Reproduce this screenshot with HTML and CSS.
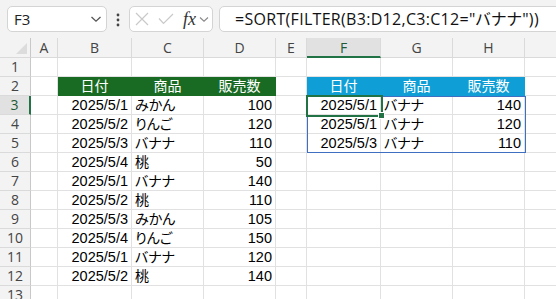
FILE: index.html
```html
<!DOCTYPE html>
<html lang="ja">
<head>
    <meta charset="UTF-8">
    <title>SORT FILTER</title>
    <link rel="stylesheet" href="styles.css">
</head>
<body>
    <div class="formula-bar">
        <div class="name-box">
            <span>F3</span>
            <svg class="chev" width="12" height="8" viewBox="0 0 12 8"><path d="M1.5 2 L6 6.2 L10.5 2" fill="none" stroke="#555" stroke-width="1.3"/></svg>
        </div>
        <div class="dots">
            <svg width="4" height="14" viewBox="0 0 4 14"><circle cx="2" cy="2" r="1.4" fill="#444"/><circle cx="2" cy="7" r="1.4" fill="#444"/><circle cx="2" cy="12" r="1.4" fill="#444"/></svg>
        </div>
        <div class="fx-box">
            <svg width="14" height="14" viewBox="0 0 14 14"><path d="M1 1 L13 13 M13 1 L1 13" stroke="#c9c9c9" stroke-width="1.2"/></svg>
            <svg width="16" height="12" viewBox="0 0 16 12"><path d="M1 5.5 L5.5 10.5 L15 1" fill="none" stroke="#c9c9c9" stroke-width="1.2"/></svg>
            <span class="fx">fx</span>
            <svg width="10" height="7" viewBox="0 0 10 7"><path d="M1 1.5 L5 5.2 L9 1.5" fill="none" stroke="#888" stroke-width="1.1"/></svg>
        </div>
        <div class="formula">=SORT(FILTER(B3:D12,C3:C12="バナナ"))</div>
    </div>

    <div class="sheet">
        <div class="corner"></div><div class="ch">A</div><div class="ch">B</div><div class="ch">C</div><div class="ch">D</div><div class="ch">E</div><div class="ch sel">F</div><div class="ch">G</div><div class="ch">H</div><div class="ch"></div>

        <div class="rh">1</div><div></div><div></div><div></div><div></div><div></div><div></div><div></div><div></div><div></div>
        <div class="rh">2</div><div></div><div class="hg">日付</div><div class="hg">商品</div><div class="hg">販売数</div><div></div><div class="hb">日付</div><div class="hb">商品</div><div class="hb">販売数</div><div></div>
        <div class="rh sel">3</div><div></div><div class="num">2025/5/1</div><div class="txt">みかん</div><div class="num">100</div><div></div><div class="num">2025/5/1</div><div class="txt">バナナ</div><div class="num">140</div><div></div>
        <div class="rh">4</div><div></div><div class="num">2025/5/2</div><div class="txt">りんご</div><div class="num">120</div><div></div><div class="num">2025/5/1</div><div class="txt">バナナ</div><div class="num">120</div><div></div>
        <div class="rh">5</div><div></div><div class="num">2025/5/3</div><div class="txt">バナナ</div><div class="num">110</div><div></div><div class="num">2025/5/3</div><div class="txt">バナナ</div><div class="num">110</div><div></div>
        <div class="rh">6</div><div></div><div class="num">2025/5/4</div><div class="txt">桃</div><div class="num">50</div><div></div><div></div><div></div><div></div><div></div>
        <div class="rh">7</div><div></div><div class="num">2025/5/1</div><div class="txt">バナナ</div><div class="num">140</div><div></div><div></div><div></div><div></div><div></div>
        <div class="rh">8</div><div></div><div class="num">2025/5/2</div><div class="txt">桃</div><div class="num">110</div><div></div><div></div><div></div><div></div><div></div>
        <div class="rh">9</div><div></div><div class="num">2025/5/3</div><div class="txt">みかん</div><div class="num">105</div><div></div><div></div><div></div><div></div><div></div>
        <div class="rh">10</div><div></div><div class="num">2025/5/4</div><div class="txt">りんご</div><div class="num">150</div><div></div><div></div><div></div><div></div><div></div>
        <div class="rh">11</div><div></div><div class="num">2025/5/1</div><div class="txt">バナナ</div><div class="num">120</div><div></div><div></div><div></div><div></div><div></div>
        <div class="rh">12</div><div></div><div class="num">2025/5/2</div><div class="txt">桃</div><div class="num">140</div><div></div><div></div><div></div><div></div><div></div>
        <div class="rh">13</div><div></div><div></div><div></div><div></div><div></div><div></div><div></div><div></div><div></div>

        <!-- spill range and active cell drawn over the grid -->
        <div class="spill"></div>
        <div class="cursor"><span class="handle"></span></div>
    </div>
</body>
</html>
```

FILE: styles.css
```css
body {
    margin: 0;
    background-color: #f3f3f3;
    font-family: "Liberation Sans", "Noto Sans CJK JP", sans-serif;
    font-feature-settings: "palt";
    overflow: hidden;
}
.formula-bar {
    display: flex;
    align-items: center;
    height: 38px;
    padding-left: 7px;
    box-sizing: border-box;
}
.formula-bar > div {
    flex-shrink: 0;
}
.name-box {
    width: 100px;
    height: 26px;
    box-sizing: border-box;
    background-color: white;
    border: 1px solid #d4d4d4;
    border-radius: 5px;
    display: flex;
    align-items: center;
    justify-content: space-between;
    padding: 0 4px 0 6px;
    font-family: "Open Sans", sans-serif;
    font-size: 15px;
    color: #222;
}
.dots {
    width: 22px;
    display: flex;
    justify-content: center;
    padding-top: 2px;
}
.fx-box {
    width: 84px;
    height: 26px;
    box-sizing: border-box;
    background-color: white;
    border: 1px solid #d4d4d4;
    border-radius: 5px;
    display: flex;
    align-items: center;
    padding-left: 5px;
}
.fx-box svg:nth-child(2) {
    margin-left: 9px;
}
.fx-box .fx {
    font-family: "Liberation Serif", serif;
    font-style: italic;
    font-size: 18px;
    color: #333;
    margin-left: 9px;
    margin-right: 3px;
}
.formula {
    width: 360px;
    margin-left: 6px;
    height: 26px;
    box-sizing: border-box;
    background-color: white;
    border: 1px solid #d4d4d4;
    border-radius: 5px;
    padding-left: 15px;
    font-family: "Open Sans", "Noto Sans CJK JP", sans-serif;
    font-size: 16px;
    letter-spacing: 0.3px;
    line-height: 24px;
    color: #111;
    white-space: nowrap;
}

.sheet {
    position: relative;
    display: grid;
    grid-template-columns: 31px 27px 74px 72px 72px 31px 74px 72px 72px 60px;
    grid-template-rows: 20px repeat(13, 19px);
    background-color: white;
    font-size: 14.5px;
}
.sheet > div {
    box-sizing: border-box;
    border-right: 1px solid #e1e1e1;
    border-bottom: 1px solid #e1e1e1;
    line-height: 18px;
    padding: 0 3px;
    white-space: nowrap;
    overflow: hidden;
}
.sheet .ch,
.sheet .rh,
.sheet .corner {
    background-color: #f3f3f3;
    border-color: #dadada;
    color: #444;
    font-family: "Open Sans", sans-serif;
    font-size: 14px;
    text-align: center;
}
.sheet .ch {
    line-height: 19px;
}
.sheet .rh {
    border-right-color: #c8c8c8;
}
.sheet .corner {
    position: relative;
    border-right-color: #c8c8c8;
}
.corner::after {
    content: "";
    position: absolute;
    right: 3px;
    bottom: 3px;
    border-style: solid;
    border-width: 0 0 11px 11px;
    border-color: transparent transparent #dcdcdc transparent;
}
.sheet .ch.sel {
    background-color: #e1e1e1;
    border-bottom: 2px solid #217346;
    color: #1f5a36;
}
.sheet .rh.sel {
    background-color: #e1e1e1;
    border-right: 2px solid #217346;
    color: #1f5a36;
}
.sheet .num {
    text-align: right;
}
.sheet .txt {
    text-align: left;
    font-size: 14px;
}
.sheet .hg,
.sheet .hb {
    color: white;
    text-align: center;
    font-size: 14px;
}
.sheet .hg {
    background-color: #196b24;
    border-color: #196b24;
}
.sheet .hb {
    background-color: #0f9ed5;
    border-color: #0f9ed5;
}

.sheet .spill {
    position: absolute;
    left: 307px;
    top: 58px;
    width: 219px;
    height: 57px;
    border: 1px solid #3e6fc0;
    padding: 0;
    pointer-events: none;
}
.sheet .cursor {
    position: absolute;
    left: 306px;
    top: 57px;
    width: 77px;
    height: 22px;
    border: 2px solid #217346;
    padding: 0;
    overflow: visible;
}
.cursor .handle {
    position: absolute;
    right: -4px;
    bottom: -4px;
    width: 5px;
    height: 5px;
    background-color: #217346;
    border: 1px solid white;
}
```
